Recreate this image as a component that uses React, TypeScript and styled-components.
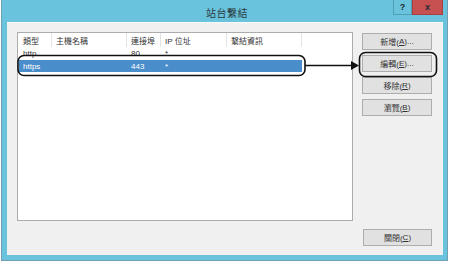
import styled, { createGlobalStyle } from 'styled-components'

const GlobalStyle = createGlobalStyle`
    html, body {
        margin: 0;
        padding: 0;
        background: #ffffff;
    }
    body {
        font-family: 'Liberation Sans', 'Noto Sans CJK TC', sans-serif;
        color: #333333;
    }
`

const Window = styled.div`
    position: relative;
    margin-left: 1px;
    width: 447px;
    height: 261px;
    border: 1px solid #6f9fb0;
    border-top: none;
    background: #69c3dc;
    display: flex;
    flex-direction: column;
    padding: 0 4px 5px 5px;
    box-sizing: border-box;
`

const TitleBar = styled.div`
    position: relative;
    height: 22px;
    display: flex;
    align-items: center;
    justify-content: center;
    & > span {
        font-size: 10px;
        color: #2b3a40;
        letter-spacing: 0.5px;
        margin-left: 4px;
        margin-top: 2px;
    }
`

const Controls = styled.div`
    position: absolute;
    top: 0;
    right: 0;
    display: flex;
    height: 15px;
`

const CtrlButton = styled.div<{ $close?: boolean }>`
    width: ${(p) => (p.$close ? '31px' : '19px')};
    height: 15px;
    box-sizing: border-box;
    display: flex;
    align-items: center;
    justify-content: center;
    font-size: 9px;
    font-weight: bold;
    color: #1f2a30;
    background: ${(p) => (p.$close ? '#c75050' : '#69c3dc')};
    border: 1px solid ${(p) => (p.$close ? '#a94040' : '#4e9fb6')};
    border-top: none;
`

const Client = styled.div`
    flex: 1;
    background: #f0f0f0;
    border-top: 1px solid #fafafa;
    display: flex;
    padding: 9px 0 0 10px;
    box-sizing: border-box;
`

const ListBox = styled.div`
    width: 336px;
    height: 189px;
    background: #ffffff;
    border: 1px solid #acacac;
    box-sizing: border-box;
    padding-left: 1px;
    font-size: 8px;
`

const Row = styled.div<{ $selected?: boolean; $header?: boolean }>`
    display: grid;
    grid-template-columns: 33px 75px 34px 66px 75px;
    height: ${(p) => (p.$header ? '14px' : '12px')};
    align-items: center;
    background: ${(p) => (p.$selected ? '#4a8dcb' : 'transparent')};
    color: ${(p) => (p.$selected ? '#ffffff' : '#333333')};
    width: 283px;
    margin-bottom: ${(p) => (p.$selected || p.$header ? '0' : '1px')};
`

const Cell = styled.div<{ $header?: boolean }>`
    height: 100%;
    display: flex;
    align-items: center;
    padding-left: 4px;
    white-space: nowrap;
    box-sizing: border-box;
    border-right: ${(p) => (p.$header ? '1px solid #e3e3e3' : 'none')};
`

const Side = styled.div`
    display: flex;
    flex-direction: column;
    margin-left: 9px;
    width: 70px;
    padding-top: 1px;
`

const ButtonStack = styled.div`
    display: flex;
    flex-direction: column;
    gap: 5px;
    flex: 1;
`

const Button = styled.div`
    height: 17px;
    box-sizing: border-box;
    background: #e1e1e1;
    border: 1px solid #adadad;
    display: flex;
    align-items: center;
    justify-content: center;
    font-size: 8px;
    color: #333333;
    & u {
        text-underline-offset: 1px;
    }
`

const CloseButton = styled(Button)`
    margin-bottom: 9px;
    margin-left: 1px;
`

const Overlay = styled.svg`
    position: absolute;
    left: 0;
    top: 0;
    pointer-events: none;
`

const rows = [
    { type: 'http', host: '', port: '80', ip: '*', info: '' },
    { type: 'https', host: '', port: '443', ip: '*', info: '', selected: true },
]

const buttons = [
    ['新增(', 'A', ')...'],
    ['編輯(', 'E', ')...'],
    ['移除(', 'R', ')'],
    ['瀏覽(', 'B', ')'],
]

const App = () => {
    return (
        <>
            <GlobalStyle />
            <Window>
                <TitleBar>
                    <span>站台繫結</span>
                    <Controls>
                        <CtrlButton>?</CtrlButton>
                        <CtrlButton $close>x</CtrlButton>
                    </Controls>
                </TitleBar>
                <Client>
                    <ListBox>
                        <Row $header>
                            <Cell $header>類型</Cell>
                            <Cell $header>主機名稱</Cell>
                            <Cell $header>連接埠</Cell>
                            <Cell $header>IP 位址</Cell>
                            <Cell $header>繫結資訊</Cell>
                        </Row>
                        {rows.map((r) => (
                            <Row key={r.type} $selected={r.selected}>
                                <Cell>{r.type}</Cell>
                                <Cell>{r.host}</Cell>
                                <Cell>{r.port}</Cell>
                                <Cell>{r.ip}</Cell>
                                <Cell>{r.info}</Cell>
                            </Row>
                        ))}
                    </ListBox>
                    <Side>
                        <ButtonStack>
                            {buttons.map(([a, k, b]) => (
                                <Button key={k}>
                                    {a}
                                    <u>{k}</u>
                                    {b}
                                </Button>
                            ))}
                        </ButtonStack>
                        <CloseButton>
                            關閉(<u>C</u>)
                        </CloseButton>
                    </Side>
                </Client>
                {/* callout annotations drawn over the dialog */}
                <Overlay width="447" height="262" viewBox="0 0 447 262">
                    <rect x="16" y="55.5" width="287" height="20" rx="6" fill="none" stroke="#111" strokeWidth="1.6" />
                    <line x1="303" y1="65.5" x2="350" y2="65.5" stroke="#111" strokeWidth="1.4" />
                    <polygon points="349,61 357,65.5 349,70" fill="#111" />
                    <rect x="357.5" y="52.5" width="77" height="24" rx="6" fill="none" stroke="#111" strokeWidth="1.6" />
                </Overlay>
            </Window>
        </>
    )
}

export default App
